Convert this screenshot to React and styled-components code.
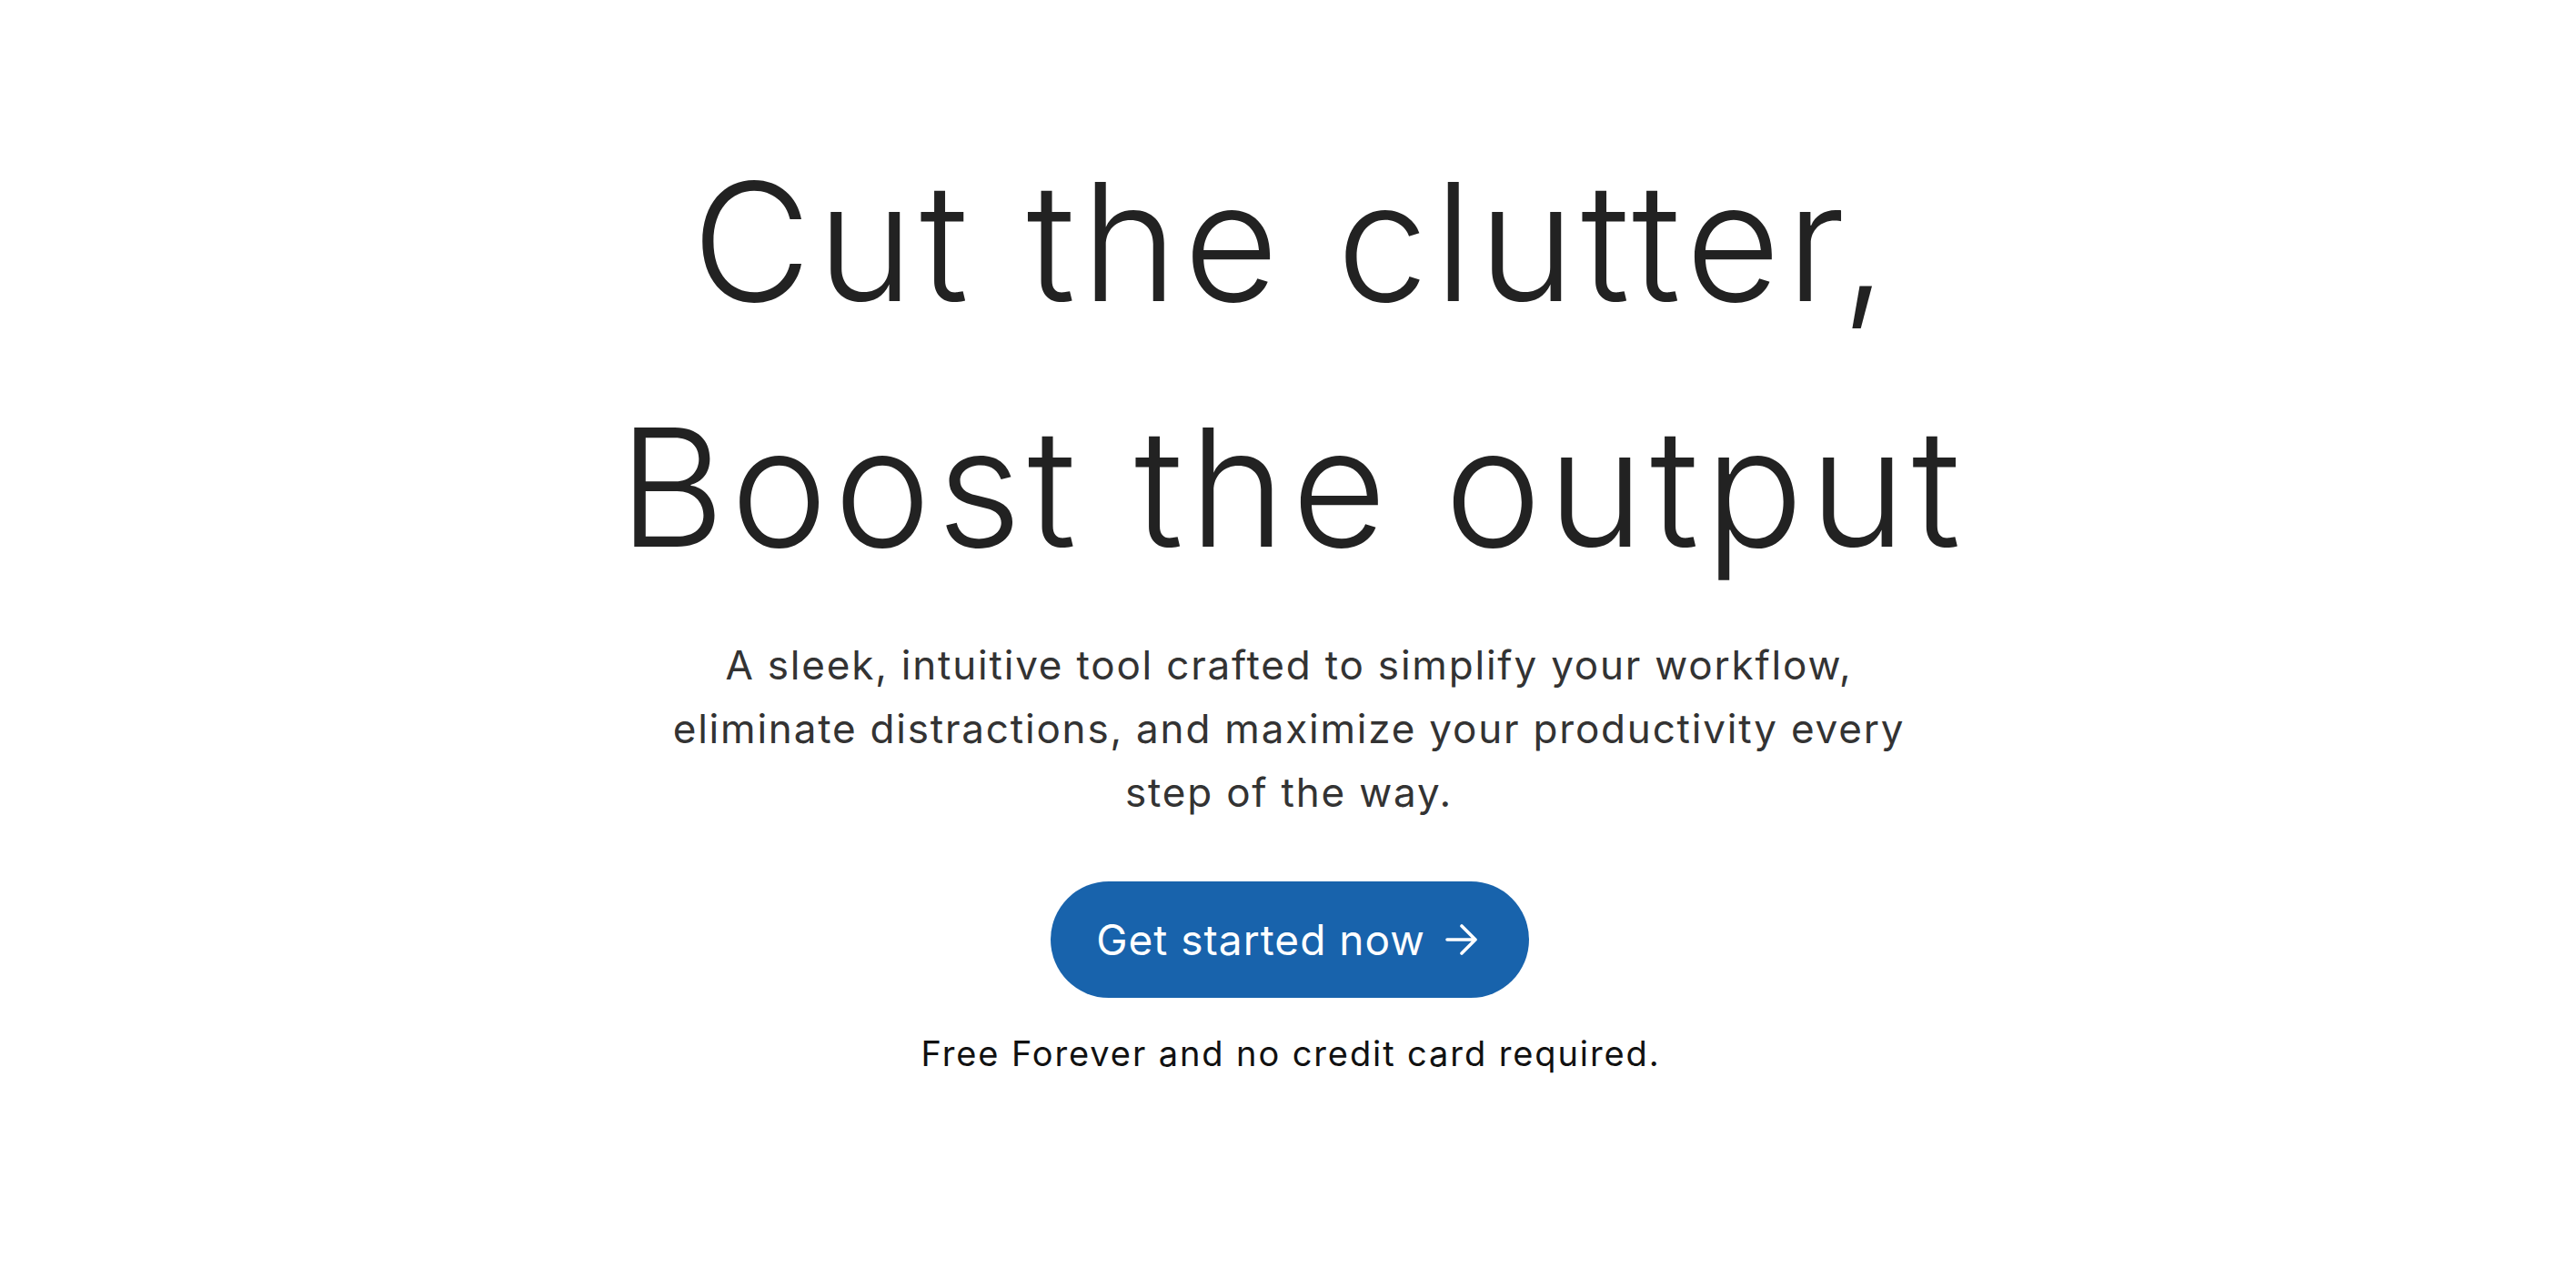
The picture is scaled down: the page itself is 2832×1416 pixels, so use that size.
import React from "react";
import styled, { createGlobalStyle } from "styled-components";

const GlobalStyle = createGlobalStyle`
  html, body {
    margin: 0;
    padding: 0;
    background: #ffffff;
  }
  body {
    font-family: Inter, "Noto Sans", sans-serif;
    -webkit-font-smoothing: antialiased;
  }
`;

const Hero = styled.main`
  min-height: 100vh;
  box-sizing: border-box;
  display: flex;
  flex-direction: column;
  align-items: center;
  padding-top: 131px;
  text-align: center;
`;

const Title = styled.h1`
  margin: 0;
  padding-left: 10px;
  font-family: Inter, sans-serif;
  font-weight: 300;
  font-size: 180px;
  line-height: 270px;
  color: #222222;
  letter-spacing: 6.6px;
`;

const Lead = styled.p`
  margin: 25px 0 0;
  padding-left: 2px;
  font-family: Inter, sans-serif;
  font-weight: 400;
  font-size: 44px;
  line-height: 70px;
  color: #333333;
  letter-spacing: 1.8px;
`;

const CTA = styled.a`
  margin-top: 63px;
  margin-left: 4px;
  display: inline-flex;
  align-items: center;
  gap: 22px;
  height: 128px;
  box-sizing: border-box;
  padding: 0 56px 0 50px;
  border-radius: 64px;
  background: #1863ac;
  color: #ffffff;
  font-family: Inter, sans-serif;
  font-weight: 400;
  font-size: 46px;
  letter-spacing: 1px;
  text-decoration: none;
  cursor: pointer;
`;

const Note = styled.p`
  margin: 33px 0 0;
  padding-left: 6px;
  font-family: Inter, sans-serif;
  font-weight: 400;
  font-size: 38px;
  line-height: 57px;
  color: #111111;
  letter-spacing: 1.9px;
`;

const Arrow = () => (
  <svg width="36" height="34" viewBox="0 0 36 34" fill="none" aria-hidden="true">
    <path
      d="M2 17H33M18 2L33 17L18 32"
      stroke="#ffffff"
      strokeWidth="3.6"
      strokeLinecap="round"
      strokeLinejoin="round"
    />
  </svg>
);

export default function App() {
  return (
    <>
      <GlobalStyle />
      <Hero>
        <Title>
          Cut the clutter,
          <br />
          Boost the output
        </Title>
        <Lead>
          A sleek, intuitive tool crafted to simplify your workflow,
          <br />
          eliminate distractions, and maximize your productivity every
          <br />
          step of the way.
        </Lead>
        <CTA href="#">
          Get started now
          <Arrow />
        </CTA>
        <Note>Free Forever and no credit card required.</Note>
      </Hero>
    </>
  );
}
